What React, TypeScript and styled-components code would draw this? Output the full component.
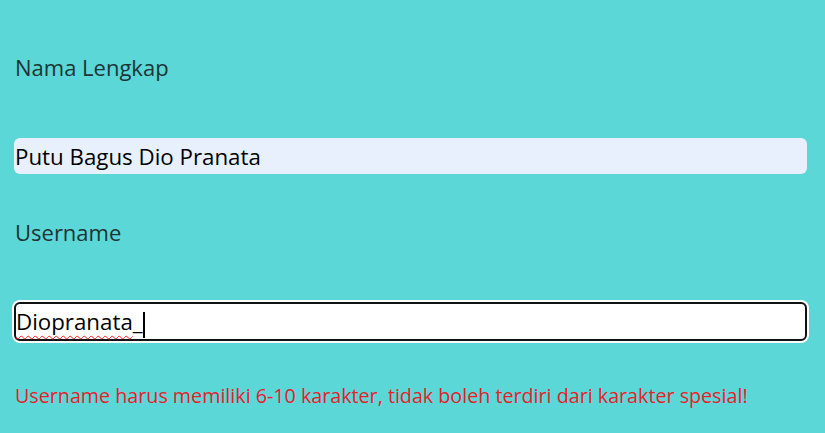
import React from "react";
import styled, { createGlobalStyle } from "styled-components";

const Global = createGlobalStyle`
  html, body { margin: 0; padding: 0; background: #5bd7d7; }
  body { font-family: "Open Sans", "Noto Sans", sans-serif; }
`;

const Page = styled.div`
  width: 825px;
  height: 433px;
  box-sizing: border-box;
  padding: 53px 18px 0 14px;
  display: flex;
  flex-direction: column;
  background: #5bd7d7;
`;

const Label = styled.label<{ $gapBelow: number }>`
  display: block;
  padding-left: 1px;
  font-size: 22px;
  line-height: 28px;
  color: #1d3535;
  margin-bottom: ${(p) => p.$gapBelow}px;
`;

const Field = styled.div<{ $gapBelow: number }>`
  position: relative;
  margin-bottom: ${(p) => p.$gapBelow}px;
`;

const Input = styled.input<{ $focused?: boolean }>`
  display: block;
  box-sizing: border-box;
  width: 100%;
  height: ${(p) => (p.$focused ? 39 : 36)}px;
  padding: 0 0 0 ${(p) => (p.$focused ? 0 : 1)}px;
  margin: 0;
  font-family: inherit;
  font-size: 22.3px;
  color: #000;
  border: ${(p) => (p.$focused ? "2px solid #111" : "none")};
  border-radius: 6px;
  background: ${(p) => (p.$focused ? "#fff" : "#e8f0fe")};
  box-shadow: ${(p) => (p.$focused ? "0 0 0 2px #fff" : "none")};
  outline: none;
`;

const Overlay = styled.span`
  position: absolute;
  left: 2px;
  top: 0;
  height: 39px;
  display: flex;
  align-items: center;
  font-size: 22.3px;
  color: transparent;
  pointer-events: none;
  white-space: pre;
`;

const Misspelled = styled.span`
  text-decoration: underline wavy #ff2020;
  text-decoration-thickness: 1px;
  text-underline-offset: 5px;
`;

const Caret = styled.span`
  display: inline-block;
  width: 2px;
  height: 26px;
  background: #000;
  align-self: flex-end;
  margin-bottom: 3px;
`;

const Error = styled.p`
  margin: 0;
  padding-left: 1px;
  font-size: 19.7px;
  line-height: 28px;
  color: #e8202a;
`;

export default function App() {
  return (
    <>
      <Global />
      <Page>
        <Label $gapBelow={57}>Nama Lengkap</Label>
        <Field $gapBelow={44}>
          <Input defaultValue="Putu Bagus Dio Pranata" spellCheck={false} />
        </Field>
        <Label $gapBelow={56}>Username</Label>
        <Field $gapBelow={41}>
          <Input $focused defaultValue="Diopranata_" spellCheck={false} />
          <Overlay aria-hidden="true">
            <Misspelled>Diopranata</Misspelled>
            <span>_</span>
            <Caret />
          </Overlay>
        </Field>
        <Error>Username harus memiliki 6-10 karakter, tidak boleh terdiri dari karakter spesial!</Error>
      </Page>
    </>
  );
}
